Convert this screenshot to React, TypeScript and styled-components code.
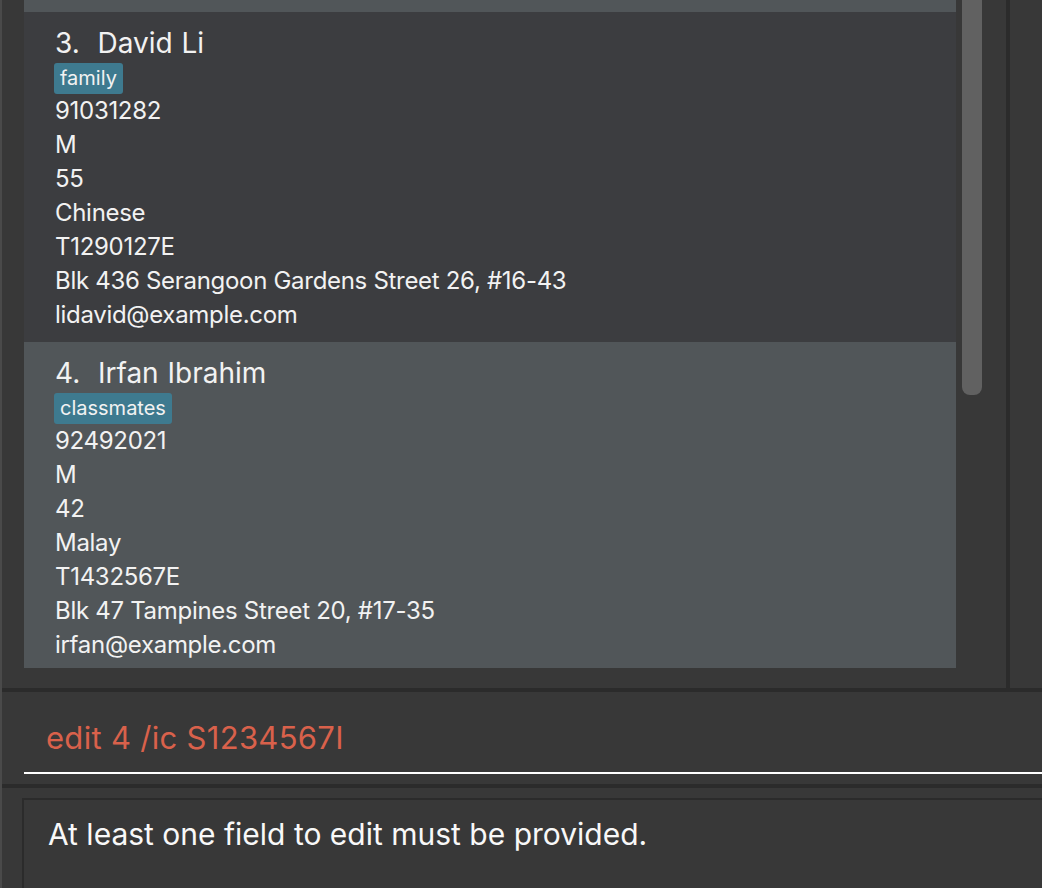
import styled, { createGlobalStyle } from "styled-components"

// 화면 전체 스타일
const GlobalStyle = createGlobalStyle`
  html, body {
    margin: 0;
    padding: 0;
    background: #383838;
    overflow: hidden;
  }
  * {
    box-sizing: border-box;
  }
`

const FONT = `Inter, "Open Sans", "Liberation Sans", sans-serif`

type Person = {
  index: number
  name: string
  tag: string
  phone: string
  sex: string
  age: string
  race: string
  ic: string
  address: string
  email: string
}

const people: Person[] = [
  {
    index: 3,
    name: "David Li",
    tag: "family",
    phone: "91031282",
    sex: "M",
    age: "55",
    race: "Chinese",
    ic: "T1290127E",
    address: "Blk 436 Serangoon Gardens Street 26, #16-43",
    email: "lidavid@example.com",
  },
  {
    index: 4,
    name: "Irfan Ibrahim",
    tag: "classmates",
    phone: "92492021",
    sex: "M",
    age: "42",
    race: "Malay",
    ic: "T1432567E",
    address: "Blk 47 Tampines Street 20, #17-35",
    email: "irfan@example.com",
  },
]

const Window = styled.div`
  width: 1042px;
  height: 888px;
  display: flex;
  flex-direction: column;
  border-left: 2px solid #4a4a4a;
  background: #383838;
  font-family: ${FONT};
  color: #f2f2f2;
`

const TopRow = styled.div`
  height: 688px;
  display: flex;
  overflow: hidden;
`

const ListPanel = styled.div`
  width: 1004px;
  display: flex;
  gap: 6px;
  padding-left: 22px;
`

const ListColumn = styled.div`
  width: 932px;
  display: flex;
  flex-direction: column;
`

const Scrollbar = styled.div`
  width: 20px;
  height: 395px;
  background: #616161;
  border-radius: 0 0 8px 8px;
`

const VDivider = styled.div`
  width: 4px;
  background: #2b2b2b;
`

const HDivider = styled.div`
  height: 4px;
  background: #2b2b2b;
`

const Cell = styled.div<{ $light: boolean; $height: number }>`
  height: ${(p) => p.$height}px;
  flex-shrink: 0;
  background: ${(p) => (p.$light ? "#515659" : "#3c3d40")};
  padding: 12px 0 0 31px;
`

const Name = styled.div`
  height: 38px;
  line-height: 38px;
  font-size: 28px;
  white-space: pre;
  word-spacing: 1px;
`

const Tag = styled.span`
  display: inline-block;
  height: 31px;
  line-height: 31px;
  margin-left: -1px;
  padding: 0 6px;
  background: #3e7a8f;
  border-radius: 3px;
  font-size: 20px;
  color: #f2f2f2;
`

const TagRow = styled.div`
  height: 32px;
  padding-top: 1px;
`

const Detail = styled.div`
  height: 34px;
  line-height: 34px;
  font-size: 24px;
  letter-spacing: -0.3px;
`

const CommandBox = styled.div`
  height: 92px;
  padding: 12px 0 10px 22px;
`

const CommandField = styled.div`
  height: 70px;
  border-bottom: 2px solid #ffffff;
  padding-left: 22px;
  line-height: 68px;
  font-size: 31px;
  letter-spacing: 0.3px;
  color: #d9614b;
`

const ResultArea = styled.div`
  flex: 1;
  padding: 10px 0 0 20px;
`

const ResultBox = styled.div`
  height: 100%;
  border-top: 2px solid #2b2b2b;
  border-left: 2px solid #2b2b2b;
  padding: 14px 0 0 24px;
  font-size: 30px;
  line-height: 40px;
  color: #f8f8f8;
`

function PersonCard({ p, light, height }: { p: Person; light: boolean; height: number }) {
  return (
    <Cell $light={light} $height={height}>
      <Name>{`${p.index}.  ${p.name}`}</Name>
      <TagRow>
        <Tag>{p.tag}</Tag>
      </TagRow>
      <Detail>{p.phone}</Detail>
      <Detail>{p.sex}</Detail>
      <Detail>{p.age}</Detail>
      <Detail>{p.race}</Detail>
      <Detail>{p.ic}</Detail>
      <Detail>{p.address}</Detail>
      <Detail>{p.email}</Detail>
    </Cell>
  )
}

export default function App() {
  return (
    <>
      <GlobalStyle />
      <Window>
        <TopRow>
          <ListPanel>
            <ListColumn>
              {/* 이전 카드의 끝부분 */}
              <Cell $light={true} $height={12} />
              <PersonCard p={people[0]} light={false} height={330} />
              <PersonCard p={people[1]} light={true} height={326} />
            </ListColumn>
            <Scrollbar />
          </ListPanel>
          <VDivider />
        </TopRow>
        <HDivider />
        <CommandBox>
          <CommandField>edit 4 /ic S1234567I</CommandField>
        </CommandBox>
        <HDivider />
        <ResultArea>
          <ResultBox>At least one field to edit must be provided.</ResultBox>
        </ResultArea>
      </Window>
    </>
  )
}
